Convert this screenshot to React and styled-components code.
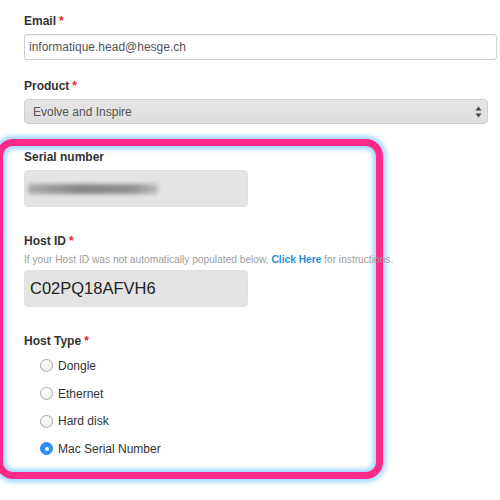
import React from "react";
import styled, { createGlobalStyle } from "styled-components";

const Global = createGlobalStyle`
  html, body { margin: 0; padding: 0; background: #fff; }
  body { font-family: "Liberation Sans", Arial, sans-serif; color: #333; overflow: hidden; }
  * { box-sizing: border-box; }
`;

const Page = styled.div`
  width: 500px;
  height: 500px;
  padding: 14px 0 0 24px;
  display: flex;
  flex-direction: column;
`;

const Field = styled.div`
  display: flex;
  flex-direction: column;
  margin-top: ${(p) => p.$top || 0}px;
`;

const Label = styled.label`
  font-weight: bold;
  font-size: 12px;
  line-height: 15px;
  color: #333;
  margin-bottom: ${(p) => (p.$gap === undefined ? 5 : p.$gap)}px;
`;

const Req = styled.span`
  color: #e8262b;
  margin-left: 3px;
`;

const TextInput = styled.div`
  width: 473px;
  height: 26px;
  border: 1px solid #cfcfcf;
  border-radius: 3px;
  background: #fff;
  font-size: 12px;
  color: #555;
  display: flex;
  align-items: center;
  padding-left: 4px;
  box-shadow: inset 0 1px 1px rgba(0,0,0,0.04);
`;

const Select = styled.div`
  width: 464px;
  height: 25px;
  border: 1px solid #d0d0d0;
  border-radius: 4px;
  background: linear-gradient(#e6e6e6, #dedede);
  font-size: 12px;
  color: #555;
  display: flex;
  align-items: center;
  justify-content: space-between;
  padding: 0 5px 0 8px;
`;

const Highlight = styled.section`
  margin: 15px 0 0 -28px;
  width: 387px;
  border: 7px solid #fd2a8b;
  border-radius: 17px;
  padding: 4px 0 9px 21px;
  box-shadow: 0 0 5px 3px rgba(140, 205, 255, 0.85), inset 0 0 5px 3px rgba(140, 205, 255, 0.85);
  display: flex;
  flex-direction: column;
`;

const GrayBox = styled.div`
  width: 224px;
  height: 37px;
  border-radius: 4px;
  background: #e4e4e4;
  border: 1px solid #e0e0e0;
  display: flex;
  align-items: center;
  padding-left: 5px;
  font-size: 16.5px;
  color: #222;
`;

const Blur = styled.div`
  width: 130px;
  height: 10px;
  margin-left: -2px;
  background: linear-gradient(90deg, #a5a5a5, #7a7a7a 40%, #858585 80%, #b8b8b8);
  filter: blur(2px);
  opacity: 0.9;
`;

const Help = styled.div`
  font-size: 10.2px;
  line-height: 12px;
  color: #9d9d9d;
  margin-bottom: 4px;
  white-space: nowrap;
  width: 340px;
`;

const Link = styled.span`
  color: #1f8edc;
  font-weight: bold;
`;

const Radios = styled.div`
  display: flex;
  flex-direction: column;
  padding-left: 16px;
`;

const RadioRow = styled.div`
  height: 27.7px;
  display: flex;
  align-items: center;
  font-size: 12px;
  color: #333;
  gap: 5px;
`;

const Circle = styled.span`
  width: 13px;
  height: 13px;
  border-radius: 50%;
  flex: none;
  display: flex;
  align-items: center;
  justify-content: center;
  background: ${(p) => (p.$on ? "#2d8ff5" : "linear-gradient(#fff, #f1f1f1)")};
  border: 1px solid ${(p) => (p.$on ? "#2a86ea" : "#a9a9a9")};
  &::after {
    content: "";
    display: ${(p) => (p.$on ? "block" : "none")};
    width: 4px;
    height: 4px;
    border-radius: 50%;
    background: #fff;
  }
`;

const Arrows = () => (
  <svg width="7" height="12" viewBox="0 0 7 12">
    <path d="M3.5 0.5 L6.5 4.5 L0.5 4.5 Z" fill="#444" />
    <path d="M3.5 11.5 L6.5 7.5 L0.5 7.5 Z" fill="#444" />
  </svg>
);

const types = ["Dongle", "Ethernet", "Hard disk", "Mac Serial Number"];

export default function App() {
  return (
    <>
      <Global />
      <Page>
        <Field>
          <Label>Email<Req>*</Req></Label>
          <TextInput>informatique.head@hesge.ch</TextInput>
        </Field>
        <Field $top={19}>
          <Label>Product<Req>*</Req></Label>
          <Select>
            <span>Evolve and Inspire</span>
            <Arrows />
          </Select>
        </Field>
        <Highlight>
          <Field>
            <Label>Serial number</Label>
            <GrayBox><Blur /></GrayBox>
          </Field>
          <Field $top={27}>
            <Label $gap={5}>Host ID<Req>*</Req></Label>
            <Help>
              If your Host ID was not automatically populated below, <Link>Click Here</Link> for instructions.
            </Help>
            <GrayBox>C02PQ18AFVH6</GrayBox>
          </Field>
          <Field $top={27}>
            <Label $gap={3}>Host Type<Req>*</Req></Label>
            <Radios>
              {types.map((t, i) => (
                <RadioRow key={t}>
                  <Circle $on={i === 3} />
                  {t}
                </RadioRow>
              ))}
            </Radios>
          </Field>
        </Highlight>
      </Page>
    </>
  );
}
